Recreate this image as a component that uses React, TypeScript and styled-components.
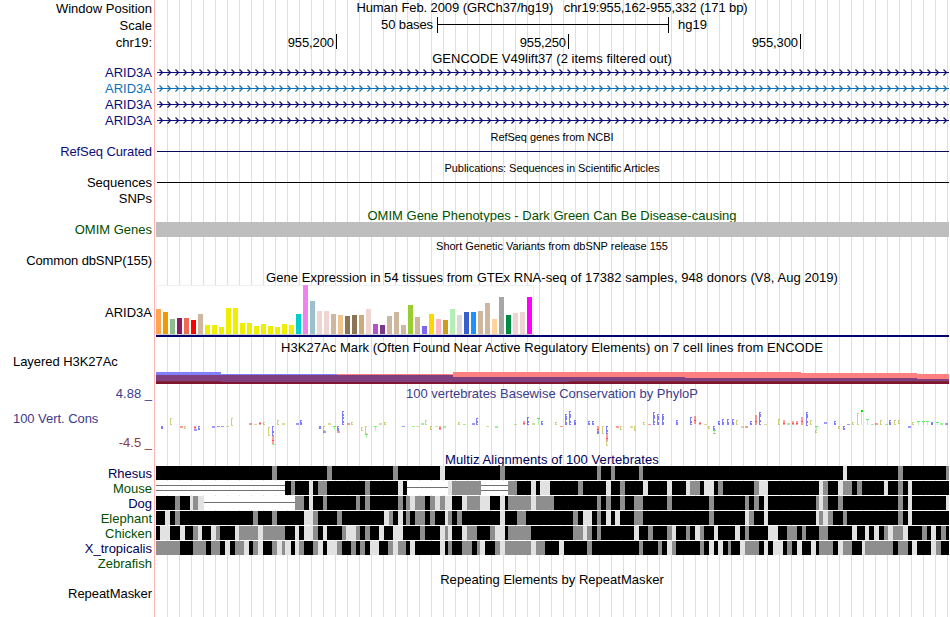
import styled, { createGlobalStyle } from 'styled-components';

const NAVY = '#0c0c78';
const BLACK = '#000000';
const MULTIZ_NAVY = '#00005a';
const GREEN = '#005000';

const VIEW_START = 156;
const VIEW_END = 949;

type Bar = [color: string, height: number];
type Mark = [x: number, y: number, height: number, base: string];
type Span = [start: number, end: number];

type Species = {
  name: string;
  color: string;
  gray?: Span[];
  light?: Span[];
  single?: Span[];
  double?: Span[];
};

const tissues: Bar[] = [
  ['#ffa54f', 25], ['#ee9a00', 22], ['#8fbc8f', 15], ['#8b1c62', 16], ['#ee6a50', 16], ['#ff0000', 14],
  ['#cdb79e', 20], ['#eeee00', 9], ['#eeee00', 9], ['#eeee00', 7], ['#eeee00', 26], ['#eeee00', 26],
  ['#eeee00', 11], ['#eeee00', 11], ['#eeee00', 8], ['#eeee00', 10], ['#eeee00', 8], ['#eeee00', 7],
  ['#eeee00', 10], ['#eeee00', 9], ['#00cdcd', 20], ['#ee82ee', 49], ['#9ac0cd', 33], ['#eed5d2', 23],
  ['#eed5d2', 23], ['#cdb79e', 20], ['#eec591', 19], ['#8b7355', 18], ['#8b7355', 19], ['#cdaa7d', 19],
  ['#eed5d2', 25], ['#b452cd', 10], ['#7a378b', 9], ['#cdb79e', 18], ['#cdb79e', 22], ['#cdb79e', 9],
  ['#9acd32', 29], ['#cdb79e', 17], ['#7a67ee', 8], ['#ffd700', 20], ['#ffb6c1', 15], ['#cd9b1d', 14],
  ['#b4eeb4', 25], ['#d9d9d9', 19], ['#3a5fcd', 22], ['#1e90ff', 22], ['#cdb79e', 23], ['#cdb79e', 31],
  ['#ffd39b', 15], ['#a6a6a6', 37], ['#008b45', 19], ['#eed5d2', 21], ['#eed5d2', 22], ['#ff00ff', 37],
];

const marks: Mark[] = [
  [161, 426, 3, 'C'], [170, 418, 7, 'G'], [180, 426, 2, 'A'], [184, 426, 3, 'G'], [194, 426, 3, 'A'],
  [194, 429, 2, 'C'], [198, 426, 4, 'C'], [212, 426, 2, 'C'], [217, 426, 1, 'C'], [221, 426, 1, 'C'],
  [226, 426, 1, 'G'], [231, 418, 8, 'G'], [249, 423, 2, 'A'], [254, 424, 1, 'G'], [259, 422, 3, 'A'],
  [263, 422, 3, 'G'], [268, 427, 9, 'G'], [272, 426, 10, 'C'], [272, 436, 8, 'A'], [272, 444, 1, 'T'],
  [277, 420, 5, 'G'], [282, 423, 2, 'G'], [296, 423, 2, 'C'], [300, 420, 5, 'C'], [319, 426, 3, 'C'],
  [323, 426, 5, 'G'], [323, 431, 2, 'C'], [328, 423, 2, 'G'], [333, 426, 4, 'T'], [337, 426, 5, 'C'],
  [337, 431, 2, 'A'], [342, 411, 7, 'C'], [342, 418, 7, 'C'], [347, 423, 2, 'A'], [351, 422, 3, 'G'],
  [361, 427, 4, 'G'], [365, 426, 8, 'G'], [365, 434, 4, 'T'], [374, 426, 5, 'T'], [379, 423, 2, 'G'],
  [384, 422, 3, 'G'], [402, 426, 1, 'C'], [412, 426, 1, 'T'], [416, 426, 1, 'G'], [421, 423, 2, 'T'],
  [425, 420, 5, 'G'], [430, 426, 4, 'G'], [435, 426, 1, 'G'], [439, 426, 4, 'A'], [443, 426, 2, 'T'],
  [458, 422, 3, 'G'], [463, 424, 1, 'T'], [472, 423, 2, 'C'], [476, 418, 7, 'C'], [486, 426, 1, 'G'],
  [495, 426, 2, 'T'], [514, 424, 1, 'G'], [523, 421, 4, 'A'], [527, 417, 8, 'C'], [532, 423, 2, 'G'],
  [537, 418, 7, 'T'], [541, 421, 4, 'C'], [555, 422, 3, 'G'], [560, 426, 1, 'A'], [565, 414, 5, 'C'],
  [565, 419, 6, 'C'], [569, 411, 6, 'C'], [569, 417, 8, 'C'], [574, 420, 5, 'C'], [588, 421, 4, 'C'],
  [592, 421, 4, 'C'], [597, 426, 5, 'A'], [597, 431, 3, 'C'], [602, 426, 8, 'G'], [606, 426, 8, 'C'],
  [606, 434, 7, 'A'], [606, 441, 5, 'G'], [616, 426, 2, 'A'], [620, 426, 4, 'G'], [630, 426, 2, 'G'],
  [634, 426, 5, 'G'], [643, 422, 3, 'G'], [648, 424, 1, 'A'], [653, 412, 6, 'C'], [653, 418, 7, 'C'],
  [657, 414, 5, 'C'], [657, 419, 6, 'C'], [662, 414, 5, 'C'], [662, 419, 6, 'C'], [676, 420, 5, 'C'],
  [690, 417, 8, 'C'], [694, 416, 8, 'A'], [699, 422, 3, 'A'], [704, 424, 1, 'G'], [708, 426, 3, 'G'],
  [713, 426, 4, 'C'], [713, 430, 3, 'T'], [713, 433, 1, 'A'], [718, 421, 4, 'C'], [722, 419, 6, 'C'],
  [727, 419, 6, 'C'], [732, 419, 6, 'C'], [736, 420, 5, 'G'], [741, 426, 2, 'G'], [745, 426, 2, 'A'],
  [750, 421, 4, 'C'], [755, 415, 10, 'A'], [759, 412, 4, 'C'], [759, 416, 9, 'C'], [764, 424, 1, 'G'],
  [778, 419, 6, 'G'], [783, 420, 5, 'A'], [787, 423, 2, 'T'], [792, 421, 4, 'A'], [796, 421, 4, 'A'],
  [801, 417, 8, 'A'], [806, 412, 5, 'C'], [806, 417, 9, 'C'], [810, 420, 5, 'G'], [815, 426, 4, 'T'],
  [815, 430, 3, 'G'], [824, 422, 2, 'C'], [834, 421, 4, 'C'], [838, 426, 3, 'G'], [843, 426, 4, 'C'],
  [847, 424, 1, 'C'], [852, 422, 3, 'G'], [857, 413, 12, 'G'], [861, 410, 15, 'T'], [866, 419, 6, 'T'],
  [871, 424, 1, 'T'], [875, 423, 2, 'A'], [880, 420, 5, 'G'], [885, 424, 1, 'T'], [889, 420, 5, 'C'],
  [894, 420, 5, 'G'], [898, 420, 4, 'G'], [908, 426, 2, 'C'], [912, 422, 3, 'G'], [917, 421, 4, 'T'],
  [922, 421, 4, 'T'], [926, 421, 4, 'T'], [931, 422, 3, 'C'], [936, 422, 3, 'T'], [940, 423, 2, 'T'],
  [945, 423, 2, 'C'],
];

const species: Species[] = [
  {
    name: 'Rhesus',
    color: MULTIZ_NAVY,
    gray: [[272, 277], [327, 332], [393, 398], [500, 505], [597, 601], [611, 615], [639, 643], [898, 903], [946, 949]],
    light: [[440, 445], [843, 847]],
  },
  {
    name: 'Mouse',
    color: GREEN,
    gray: [
      [291, 295], [318, 327], [365, 370], [452, 481], [508, 517], [578, 583], [620, 625], [690, 700],
      [718, 723], [754, 759], [823, 828], [843, 852], [857, 862], [898, 903],
    ],
    light: [
      [309, 313], [398, 403], [448, 452], [531, 536], [540, 550], [606, 611], [643, 648], [667, 672],
      [686, 690], [704, 714], [759, 768], [819, 823], [838, 843], [884, 888], [908, 912],
    ],
    single: [[407, 448]],
    double: [[156, 285], [481, 508]],
  },
  {
    name: 'Dog',
    color: MULTIZ_NAVY,
    gray: [
      [175, 180], [193, 198], [295, 304], [323, 327], [356, 360], [365, 370], [398, 403], [406, 410],
      [415, 425], [430, 435], [440, 445], [467, 480], [508, 531], [536, 554], [597, 601], [606, 611],
      [620, 625], [634, 643], [667, 672], [709, 714], [745, 749], [754, 759], [816, 819], [823, 828],
      [838, 843], [898, 903],
    ],
    light: [
      [190, 193], [198, 204], [309, 313], [410, 415], [435, 440], [445, 452], [462, 467], [480, 490],
      [500, 505], [531, 536], [764, 768], [819, 823], [908, 912], [946, 949],
    ],
    single: [[204, 295]],
  },
  {
    name: 'Elephant',
    color: GREEN,
    gray: [
      [175, 180], [253, 258], [272, 277], [313, 318], [337, 342], [389, 393], [406, 410], [415, 425],
      [430, 435], [448, 452], [457, 462], [517, 526], [573, 578], [597, 601], [634, 643], [709, 714],
      [749, 754], [819, 823], [828, 833], [843, 847], [898, 903],
    ],
    light: [
      [165, 170], [304, 313], [384, 389], [398, 403], [445, 448], [500, 505], [583, 592], [606, 611],
      [615, 620], [745, 749], [764, 768], [816, 819], [823, 828], [908, 912],
    ],
  },
  {
    name: 'Chicken',
    color: GREEN,
    gray: [
      [193, 198], [216, 220], [239, 258], [263, 285], [313, 318], [342, 346], [356, 360], [365, 370],
      [420, 425], [445, 448], [467, 477], [490, 495], [508, 531], [573, 583], [587, 592], [597, 601],
      [648, 653], [667, 672], [686, 690], [700, 704], [745, 749], [787, 797], [802, 806], [819, 828],
      [884, 888], [893, 903], [922, 927], [941, 946],
    ],
    light: [
      [160, 170], [180, 185], [198, 202], [211, 216], [235, 239], [258, 263], [295, 299], [304, 313],
      [323, 327], [346, 356], [379, 384], [393, 403], [440, 445], [448, 452], [462, 467], [495, 505],
      [583, 587], [634, 639], [672, 676], [695, 700], [714, 718], [735, 740], [768, 778], [852, 857],
      [865, 869], [874, 879], [888, 893], [903, 908], [931, 936],
    ],
  },
  {
    name: 'X_tropicalis',
    color: MULTIZ_NAVY,
    gray: [
      [156, 180], [193, 206], [211, 220], [235, 244], [253, 258], [272, 277], [282, 285], [299, 304],
      [313, 318], [337, 342], [351, 356], [360, 365], [388, 393], [398, 406], [448, 452], [462, 472],
      [477, 480], [495, 500], [505, 531], [536, 545], [587, 592], [639, 643], [658, 662], [672, 676],
      [700, 704], [728, 731], [745, 759], [787, 792], [819, 833], [843, 852], [865, 893], [898, 908],
      [936, 941],
    ],
    light: [
      [225, 230], [244, 249], [258, 263], [277, 282], [285, 291], [295, 299], [318, 323], [327, 337],
      [370, 379], [393, 398], [410, 415], [440, 445], [480, 485], [500, 505], [531, 536], [559, 564],
      [667, 672], [709, 714], [718, 723], [740, 745], [764, 768], [773, 783], [797, 802], [811, 816],
      [838, 843], [862, 865], [912, 917], [931, 936],
    ],
  },
];

const baseColors: Record<string, string> = {
  A: '#ff0000',
  C: '#0000ff',
  G: '#a0a000',
  T: '#00e000',
};

const Genes = ({ color }: { color: string }) => {
  const arrows = [];
  for (let x = 159; x < VIEW_END - 3; x += 8) {
    arrows.push(`M${x + 0.5} 4.5l3 3l-3 3`);
  }
  return (
    <Chart viewBox="155 0 794 16" height={16} stroke={color} fill="none">
      <path d="M157 7.5H949" />
      <path d={arrows.join('')} strokeWidth={1.15} />
    </Chart>
  );
};

const Expression = () => (
  <Chart viewBox="155 0 794 54" height={54} shapeRendering="crispEdges">
    <rect x={156} y={0} width={378} height={50} fill="#f0f0f0" />
    <rect x={157} y={1} width={376} height={48} fill="#fff" />
    <rect x={156} y={49} width={378} height={1} fill="#d0d0d0" />
    {tissues.map(([color, height], i) => (
      <rect key={i} x={VIEW_START + i * 7} y={49 - height} width={5} height={height} fill={color} />
    ))}
    <rect x={156} y={50} width={793} height={2} fill="#00006e" />
  </Chart>
);

const Histone = () => (
  <Chart viewBox="155 355 794 32" height={32} shapeRendering="crispEdges">
    <path fill="#8080ff" d="M156 372H221V374H337V376H156z" />
    <path fill="#ff8080" d="M337 374H453V372H801V373H917V374H949V380H337z" />
    <path fill="#804080" d="M156 375H453V377H685V378H917V379H949V382H156z" />
    <path fill="#80283c" d="M156 381H221V382H156zM569 381H949V382H569z" />
    <rect x={156} y={382} width={793} height={2} fill="#801430" />
  </Chart>
);

const BaseMark = ({ mark: [x, y, height, base] }: { mark: Mark }) => {
  const color = baseColors[base];
  if (height < 3) {
    return <rect x={x} y={y} width={3} height={height} fill={color} opacity={0.4} />;
  }
  if (base === 'T') {
    const tall = height > 10;
    return (
      <g fill={color}>
        <rect x={x} y={y} width={tall ? 2 : 3} height={tall ? 2 : 1} opacity={tall ? 1 : 0.6} />
        <rect x={x + (tall ? 0 : 1)} y={y + 1} width={1} height={height - 1} opacity={0.3} />
      </g>
    );
  }
  if (base === 'A') {
    return (
      <g fill={color}>
        <rect x={x} y={y} width={2} height={height} opacity={0.38} />
        <rect x={x} y={y + Math.floor(height * 0.6)} width={2} height={1} opacity={0.5} />
      </g>
    );
  }
  return (
    <g fill={color} opacity={0.5}>
      <rect x={x} y={y} width={1} height={height} />
      <rect x={x + 1} y={y} width={1} height={1} />
      <rect x={x + 1} y={y + height - 1} width={1} height={1} />
      {base === 'C' && <rect x={x + 1} y={y + Math.floor(height / 2)} width={1} height={2} />}
    </g>
  );
};

const Alignment = ({ item }: { item: Species }) => {
  const bars = (spans: Span[] = [], fill: string, y = 0, height = 14) =>
    spans.map(([start, end]) => (
      <rect key={`${start}-${y}-${fill}`} x={start} y={y} width={end - start} height={height} fill={fill} />
    ));
  return (
    <Chart viewBox="155 0 794 15" height={15} shapeRendering="crispEdges">
      <rect x={VIEW_START} y={0} width={VIEW_END - VIEW_START} height={14} />
      {bars(item.gray, '#8e8e8e')}
      {bars(item.light, '#e2e2e2')}
      {bars(item.single, '#fff')}
      {bars(item.double, '#fff')}
      {bars(item.single, '#707070', 6, 1)}
      {bars(item.double, '#707070', 4, 1)}
      {bars(item.double, '#707070', 9, 1)}
    </Chart>
  );
};

const App = () => (
  <Browser>
    <GlobalStyle />
    <Row $height={17}>
      <Label>Window Position</Label>
      <Title $spacing={-0.09} $shift={-2}>
        Human Feb. 2009 (GRCh37/hg19)&nbsp;&nbsp; chr19:955,162-955,332 (171 bp)
      </Title>
    </Row>
    <Row $height={17}>
      <Label>Scale</Label>
      <Ruler>
        <RulerText>50 bases</RulerText>
        <RulerBar />
        <span>hg19</span>
      </Ruler>
    </Row>
    <Row $height={17}>
      <Label>chr19:</Label>
      <Positions>
        <Tick $width={182}>955,200</Tick>
        <Tick $width={232}>955,250</Tick>
        <Tick $width={232}>955,300</Tick>
      </Positions>
    </Row>
    <Row $height={14}>
      <Label />
      <Title $spacing={0.03} $shift={2}>GENCODE V49lift37 (2 items filtered out)</Title>
    </Row>
    {[NAVY, '#0e70b4', NAVY, NAVY].map((color, i) => (
      <Row key={i} $height={16}>
        <Label $color={color} $lift={2}>ARID3A</Label>
        <Genes color={color} />
      </Row>
    ))}
    <Row $height={15}>
      <Label />
      <Title $small $spacing={-0.05}>RefSeq genes from NCBI</Title>
    </Row>
    <Row $height={16}>
      <Label $color={NAVY} $lift={2} $spacing={-0.1}>RefSeq Curated</Label>
      <Line $color="#0a0a5a" />
    </Row>
    <Row $height={15}>
      <Label />
      <Title $small $spacing={-0.06}>Publications: Sequences in Scientific Articles</Title>
    </Row>
    <Row $height={16}>
      <Label $lift={2}>Sequences</Label>
      <Line $color={BLACK} />
    </Row>
    <Row $height={16}>
      <Label $lift={2}>SNPs</Label>
    </Row>
    <Row $height={15}>
      <Label />
      <Title $color={GREEN} $spacing={0.01} $shift={2}>
        OMIM Gene Phenotypes - Dark Green Can Be Disease-causing
      </Title>
    </Row>
    <Row $height={16}>
      <Label $color={GREEN} $lift={2}>OMIM Genes</Label>
      <OmimBar />
    </Row>
    <Row $height={15}>
      <Label />
      <Title $small $spacing={-0.03}>Short Genetic Variants from dbSNP release 155</Title>
    </Row>
    <Row $height={16}>
      <Label $lift={2} $spacing={-0.12}>Common dbSNP(155)</Label>
    </Row>
    <Row $height={16}>
      <Label />
      <Title $spacing={0.05} $shift={2}>
        Gene Expression in 54 tissues from GTEx RNA-seq of 17382 samples, 948 donors (V8, Aug 2019)
      </Title>
    </Row>
    <Row $height={54}>
      <Label>ARID3A</Label>
      <Expression />
    </Row>
    <Row $height={16}>
      <Label />
      <Title $spacing={0.05} $shift={2}>
        H3K27Ac Mark (Often Found Near Active Regulatory Elements) on 7 cell lines from ENCODE
      </Title>
    </Row>
    <Row $height={32}>
      <WiggleLabels>
        <WiggleName>Layered H3K27Ac</WiggleName>
      </WiggleLabels>
      <Histone />
    </Row>
    <Row $height={66}>
      <WiggleLabels>
        <Limit $color="#3c3c8c">4.88 _</Limit>
        <WiggleName $color="#3c3c8c">100 Vert. Cons</WiggleName>
        <Limit $color="#8c3c3c">-4.5 _</Limit>
      </WiggleLabels>
      <Track>
        <Title $color="#3c3c8c">100 vertebrates Basewise Conservation by PhyloP</Title>
        <Chart viewBox="155 401 794 52" height={52} shapeRendering="crispEdges">
          {marks.map((mark, i) => (
            <BaseMark key={i} mark={mark} />
          ))}
        </Chart>
      </Track>
    </Row>
    <Row $height={13}>
      <Label />
      <Title $color={MULTIZ_NAVY} $spacing={0.08}>Multiz Alignments of 100 Vertebrates</Title>
    </Row>
    {species.map((item) => (
      <Row key={item.name} $height={15}>
        <Label $color={item.color}>{item.name}</Label>
        <Alignment item={item} />
      </Row>
    ))}
    <Row $height={15}>
      <Label $color={GREEN}>Zebrafish</Label>
    </Row>
    <Row $height={16}>
      <Label />
      <Title $spacing={0.03} $shift={2}>Repeating Elements by RepeatMasker</Title>
    </Row>
    <Row $height={15}>
      <Label $lift={2} $spacing={-0.05}>RepeatMasker</Label>
    </Row>
  </Browser>
);

export default App;

const GlobalStyle = createGlobalStyle`
  body {
    margin: 0;
    background: #fff;
  }
`;

const Browser = styled.main`
  box-sizing: border-box;
  width: 949px;
  height: 617px;
  overflow: hidden;
  font: 13px/15px 'Liberation Sans', Arial, sans-serif;
  color: #000;
  white-space: nowrap;
  background:
    linear-gradient(#ffb4b4, #ffb4b4) 154px 0 / 1px 100% no-repeat,
    linear-gradient(#fff, #fff) 0 0 / 160px 100% no-repeat,
    linear-gradient(to right, #dcdcfa 1px, transparent 1px) 11px 0 / 12px 100%;
`;

const Row = styled.div<{ $height: number }>`
  display: flex;
  height: ${({ $height }) => $height}px;
`;

const Label = styled.div<{ $color?: string; $lift?: number; $spacing?: number }>`
  box-sizing: border-box;
  display: flex;
  flex: 0 0 155px;
  align-items: center;
  justify-content: flex-end;
  padding-right: 3px;
  padding-bottom: ${({ $lift }) => $lift || 0}px;
  letter-spacing: ${({ $spacing }) => $spacing || 0}px;
  color: ${({ $color }) => $color || BLACK};
`;

const Track = styled.div`
  flex: 1;
`;

const Title = styled.div<{ $color?: string; $small?: boolean; $spacing?: number; $shift?: number }>`
  display: flex;
  flex: 1;
  align-items: center;
  justify-content: center;
  margin-top: ${({ $shift }) => $shift || 0}px;
  font-size: ${({ $small }) => ($small ? 11 : 13)}px;
  line-height: 14px;
  letter-spacing: ${({ $spacing }) => $spacing || 0}px;
  color: ${({ $color }) => $color || BLACK};
`;

const Chart = styled.svg`
  display: block;
  width: 794px;
`;

const Ruler = styled.div`
  display: flex;
  align-items: flex-start;
`;

const RulerText = styled.span`
  width: 278px;
  margin-right: 4px;
  letter-spacing: -0.1px;
  text-align: right;
`;

const RulerBar = styled.div`
  box-sizing: border-box;
  width: 232px;
  height: 16px;
  margin-right: 9px;
  border: solid #000;
  border-width: 0 1px;
  background: linear-gradient(#000, #000) 0 7px / 100% 1px no-repeat;
`;

const Positions = styled.div`
  display: flex;
`;

const Tick = styled.div<{ $width: number }>`
  box-sizing: border-box;
  width: ${({ $width }) => $width}px;
  height: 15px;
  padding-right: 2px;
  border-right: 1px solid #000;
  line-height: 17px;
  letter-spacing: -0.1px;
  text-align: right;
`;

const Line = styled.div<{ $color: string }>`
  flex: 1;
  height: 1px;
  margin: 7px 0 0 2px;
  background: ${({ $color }) => $color};
`;

const OmimBar = styled.div`
  flex: 1;
  height: 15px;
  margin-left: 1px;
  background: #bebebe;
`;

const WiggleLabels = styled.div`
  box-sizing: border-box;
  display: flex;
  flex: 0 0 155px;
  flex-direction: column;
  justify-content: space-between;
  padding-bottom: 3px;
`;

const WiggleName = styled.div<{ $color?: string }>`
  padding-left: 13px;
  line-height: 14px;
  letter-spacing: -0.05px;
  color: ${({ $color }) => $color || BLACK};
`;

const Limit = styled.div<{ $color: string }>`
  padding-right: 3px;
  line-height: 14px;
  text-align: right;
  color: ${({ $color }) => $color};
`;
